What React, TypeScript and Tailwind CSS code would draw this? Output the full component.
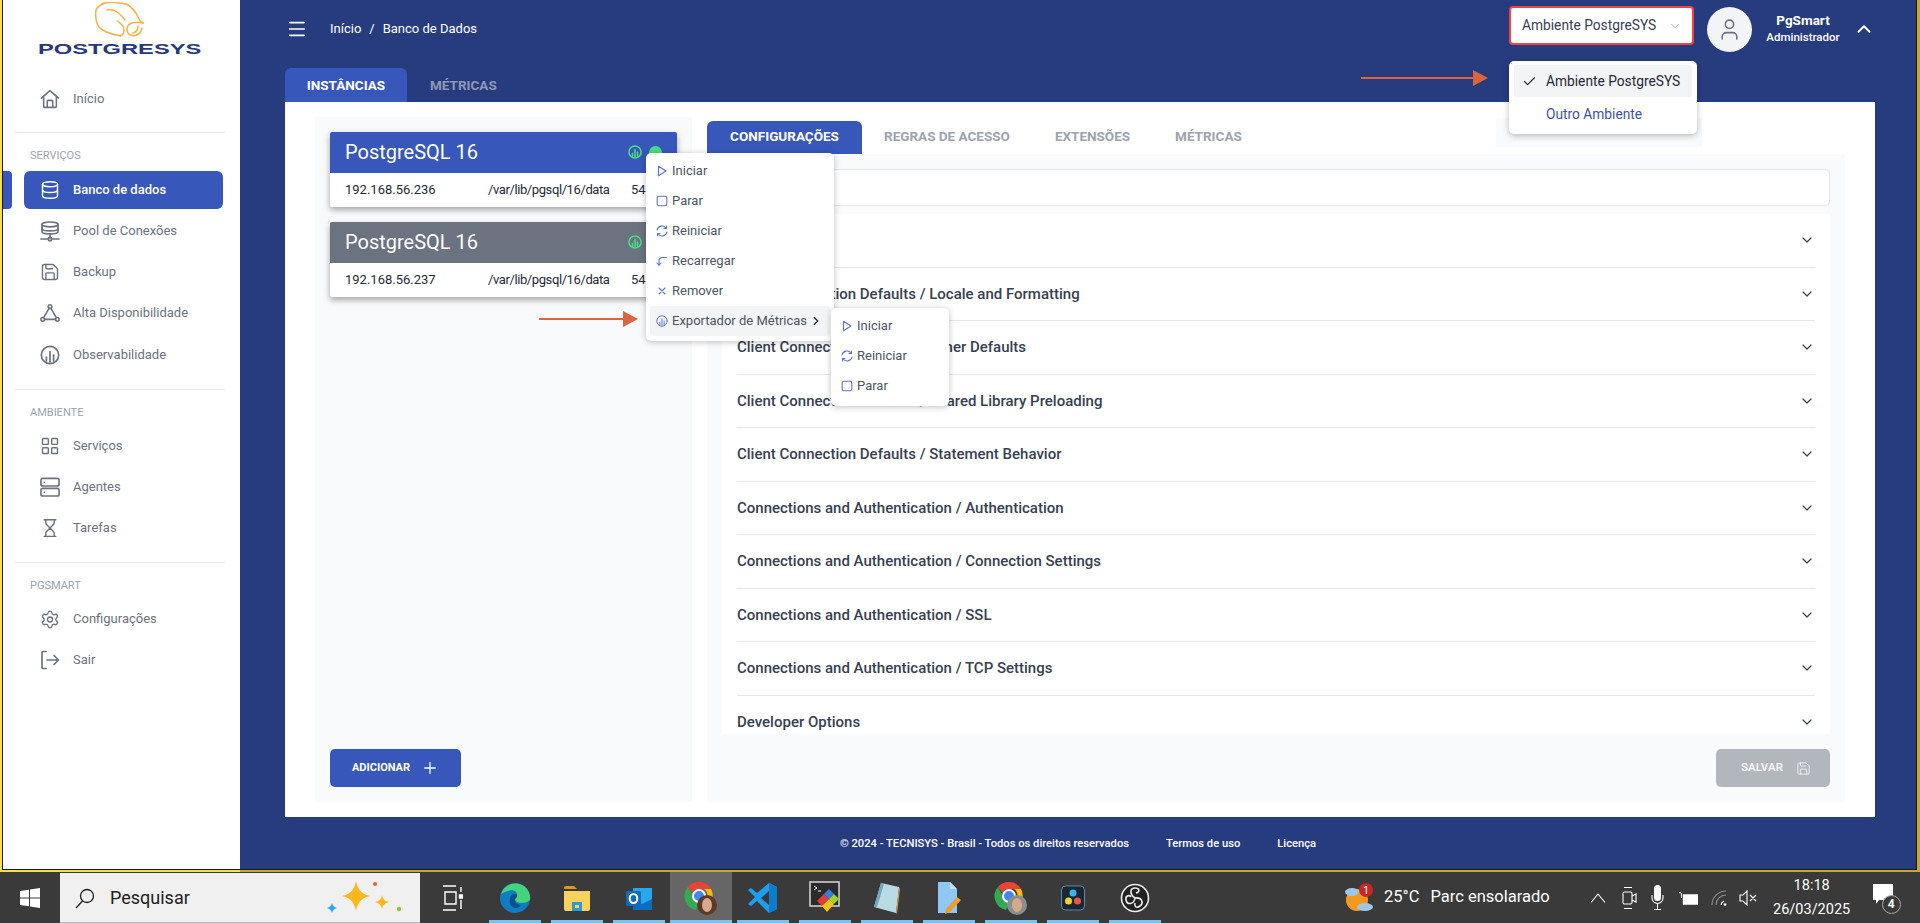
import { Check, ChevronDown, ChevronRight, ChevronUp, Database, Hourglass, LayoutGrid, Menu, Plus, Save, Settings, User } from "lucide-react";
import type { ReactNode } from "react";

const line = { fill: "none", stroke: "currentColor", strokeLinecap: "round", strokeLinejoin: "round" } as const;

function HomeIcon() {
  return (
    <svg width="22" height="22" viewBox="0 0 22 22" strokeWidth="1.7" {...line}>
      <path d="M1.5 10 11 1.8 20.5 10" />
      <path d="M4 8v11.2a1 1 0 0 0 1 1h12a1 1 0 0 0 1-1V8" />
      <path d="M8 20v-6.5a1 1 0 0 1 1-1h4a1 1 0 0 1 1 1V20" />
    </svg>
  );
}

function PoolIcon() {
  return (
    <svg width="20" height="21" viewBox="0 0 20 21" strokeWidth="1.7" {...line}>
      <ellipse cx="10" cy="3.4" rx="8" ry="2.4" />
      <path d="M2 3.4v7c0 1.4 3.6 2.4 8 2.4s8-1 8-2.4v-7" />
      <path d="M2 7.4c0 1.4 3.6 2.4 8 2.4s8-1 8-2.4" />
      <path d="M10 13v4M1 18h7M12 18h7" />
      <circle cx="10" cy="18" r="1.7" />
    </svg>
  );
}

function TriangleNodes() {
  return (
    <svg width="22" height="20" viewBox="0 0 22 20" strokeWidth="1.7" {...line}>
      <circle cx="11" cy="3" r="2" />
      <circle cx="3" cy="17" r="2" />
      <circle cx="19" cy="17" r="2" />
      <path d="M10 4.8 4 15.2M12 4.8l6 10.4M5 17h12" />
    </svg>
  );
}

function MetricIcon({ size = 20, width = 1.7 }: { size?: number; width?: number }) {
  return (
    <svg width={size} height={size} viewBox="0 0 20 20" strokeWidth={width} {...line}>
      <circle cx="10" cy="10" r="8.7" />
      <path d="M6.4 16v-4M10 17V6.5M13.6 16v-6" />
    </svg>
  );
}

function ExitIcon() {
  return (
    <svg width="20" height="20" viewBox="0 0 20 20" strokeWidth="1.7" {...line}>
      <path d="M6 1.5H3a1 1 0 0 0-1 1v15a1 1 0 0 0 1 1h3" />
      <path d="M7 10h11.5M14 5.5l4.5 4.5-4.5 4.5" />
    </svg>
  );
}

function AgentIcon() {
  return (
    <svg width="21" height="20" viewBox="0 0 21 20" strokeWidth="1.7" {...line}>
      <rect x="1" y="1" width="19" height="8" rx="2" />
      <rect x="1" y="11.5" width="19" height="8" rx="2" />
      <path d="M4.5 5h.1M4.5 15.5h.1" />
    </svg>
  );
}

function PlayIcon() {
  return (
    <svg width="12" height="12" viewBox="0 0 12 12" strokeWidth="1.1" {...line}>
      <path d="M2.5 1.2 10 6l-7.500 4.800z" />
    </svg>
  );
}

function StopIcon() {
  return (
    <svg width="12" height="12" viewBox="0 0 12 12" strokeWidth="1.1" {...line}>
      <rect x="1.200" y="1.200" width="9.600" height="9.600" rx="1.800" />
    </svg>
  );
}

function RestartIcon() {
  return (
    <svg width="12" height="12" viewBox="0 0 12 12" strokeWidth="1.100" {...line}>
      <path d="M1 5a5 5 0 0 1 9-1.800M11 7a5 5 0 0 1-9 1.800" />
      <path d="M10.400 1v2.500H8M1.600 11V8.500H4" />
    </svg>
  );
}

function ReloadIcon() {
  return (
    <svg width="12" height="12" viewBox="0 0 12 12" strokeWidth="1.100" {...line}>
      <path d="M10.500 2.500H6.500A3.500 3.500 0 0 0 3 6v4" />
      <path d="M1 8l2 2.200L5 8" />
    </svg>
  );
}

function CloseIcon() {
  return (
    <svg width="12" height="12" viewBox="0 0 12 12" strokeWidth="1.100" {...line}>
      <path d="M3 3l6 6M9 3 3 9" />
    </svg>
  );
}

function OrangeArrow({ width, className }: { width: number; className: string }) {
  return (
    <svg className={className} width={width} height="16" viewBox={`0 0 ${width} 16`}>
      <path d={`M0 7h${width - 14}v2H0z`} fill="#dc6440" />
      <path d={`M${width - 15} 0 ${width} 8l-15 8z`} fill="#dc6440" />
    </svg>
  );
}

function Logo() {
  return (
    <div className="flex flex-col items-center">
      <svg width="49" height="36" viewBox="0 0 49 36" fill="none" stroke="#fbb040" strokeWidth="1.500" strokeLinecap="round" strokeLinejoin="round">
        <path d="M6.600 2C11 0 16 0 20 0.500 26 1 30 1.500 33 3c5 3 8 8 10 12 1 3 3 5 5 6" />
        <path d="M8 2C3 4 0.500 7 0.600 11c0 6 1 11 3.400 14 3 4 11 7 21.600 9" />
        <path d="M12 8c4-1 7 0 10 2 3 2 6 5 8 8" />
        <path d="M48 21c-4-1-8-1-11 0-3 1-5 3-5 6 0 4 2 6 5 6.500 3 0.500 6-0.500 8-3 1-1.500 2-3 2-4.500" />
        <path d="M43 24c0 3-2 6-5 7" />
        <path d="M25.600 34c2-1 3.400-3 3.400-6 0-2-1-4-2-5-1-1-3-3-4.500-4" />
      </svg>
      <div className="mt-[4px] h-[14px] scale-x-[1.58] font-['Liberation_Sans'] text-[15px] leading-[14px] font-bold text-[#27397c]">POSTGRESYS</div>
    </div>
  );
}

function NavItem({ icon, label, active, top }: { icon: ReactNode; label: string; active?: boolean; top?: string }) {
  return (
    <div className={`mr-[17px] ml-[21px] flex items-center rounded-[6px] pl-[16px] text-[13px] ${top ?? "mt-[3px] h-[38px]"} ${active ? "bg-[#3757bb] font-medium text-white" : "text-[#6b7280]"}`}>
      <span className="flex w-[20px] justify-center">{icon}</span>
      <span className="ml-[13px]">{label}</span>
    </div>
  );
}

function Section({ title, children }: { title: string; children: ReactNode }) {
  return (
    <div className="mr-[15px] ml-[12px] border-t border-[#e5e7eb] pt-[14px]">
      <div className="pl-[15px] text-[11px] leading-[18px] text-[#9ca3af]">{title}</div>
      <div className="-mr-[15px] -ml-[12px]">{children}</div>
    </div>
  );
}

function Sidebar() {
  return (
    <aside className="relative flex w-[237px] shrink-0 flex-col bg-white">
      <div className="absolute top-[171px] left-0 h-[38px] w-[9px] rounded-r-[4px] bg-[#3757bb]" />
      <div className="h-[70px] pt-[2px] pr-[4px]">
        <Logo />
      </div>
      <div className="h-[62px] pt-[7px]">
        <NavItem icon={<HomeIcon />} label="Início" />
      </div>
      <Section title="SERVIÇOS">
        <NavItem active top="mt-[6px] h-[38px]" icon={<Database size={20} strokeWidth={1.7} />} label="Banco de dados" />
        <NavItem icon={<PoolIcon />} label="Pool de Conexões" />
        <NavItem icon={<Save size={20} strokeWidth={1.7} />} label="Backup" />
        <NavItem icon={<TriangleNodes />} label="Alta Disponibilidade" />
        <NavItem top="mt-[4px] h-[37px]" icon={<MetricIcon />} label="Observabilidade" />
      </Section>
      <div className="h-[16px]" />
      <Section title="AMBIENTE">
        <NavItem top="mt-[5px] h-[38px]" icon={<LayoutGrid size={20} strokeWidth={1.7} />} label="Serviços" />
        <NavItem icon={<AgentIcon />} label="Agentes" />
        <NavItem icon={<Hourglass size={20} strokeWidth={1.7} />} label="Tarefas" />
      </Section>
      <div className="h-[15px]" />
      <Section title="PGSMART">
        <NavItem top="mt-[5px] h-[38px]" icon={<Settings size={21} strokeWidth={1.600} />} label="Configurações" />
        <NavItem icon={<ExitIcon />} label="Sair" />
      </Section>
    </aside>
  );
}

function Header() {
  return (
    <header className="flex h-[58px] items-center pr-[41px] pl-[46px] text-white">
      <Menu size={22} strokeWidth={1.800} />
      <nav className="ml-[22px] flex gap-[8px] text-[13px]">
        <span>Início</span>
        <span>/</span>
        <span>Banco de Dados</span>
      </nav>
      <div className="mb-[7px] ml-auto flex h-[39px] w-[185px] items-center justify-between rounded-[4px] border-2 border-[#ef4444] bg-white pr-[10px] pl-[11px] text-[13.750px] text-[#374151]">
        <span>Ambiente PostgreSYS</span>
        <ChevronDown size={14} strokeWidth={1.300} className="text-[#9ca3af]" />
      </div>
      <div className="mt-[1px] ml-[13px] flex h-[45px] w-[45px] items-center justify-center rounded-full bg-[#f3f4f6] text-[#6b7280]">
        <User size={25} strokeWidth={1.500} />
      </div>
      <div className="ml-[16px] flex w-[70px] flex-col items-center">
        <span className="text-[13.5px] leading-[17px] font-bold">PgSmart</span>
        <span className="text-[11.500px] leading-[17px] font-medium">Administrador</span>
      </div>
      <ChevronUp size={22} strokeWidth={2} className="ml-[15px]" />
    </header>
  );
}

function InstanceCard({ ip, dark }: { ip: string; dark?: boolean }) {
  return (
    <div className="rounded-[2px] bg-white shadow-[0_3px_6px_rgba(0,0,0,0.35)]">
      <div className={`flex h-[41px] items-center rounded-t-[2px] pr-[15px] pb-[1px] pl-[15px] text-[20px] text-white ${dark ? "bg-[#6b7280]" : "bg-[#3757bb]"}`}>
        <span>PostgreSQL 16</span>
        <span className="ml-auto flex items-center gap-[7px] text-[#4ade80]">
          <MetricIcon size={14} width={2.200} />
          <span className="h-[13px] w-[13px] rounded-full bg-[#4ade80]" />
        </span>
      </div>
      <div className="flex h-[34px] items-center pl-[15px] text-[13px] text-[#1f2937]">
        <span className="w-[143px]">{ip}</span>
        <span className="w-[143px] tracking-[-0.4px]">/var/lib/pgsql/16/data</span>
        <span>5432</span>
      </div>
    </div>
  );
}

function Row({ label }: { label: string }) {
  return (
    <div className="mx-[15px] flex h-[53.5px] shrink-0 items-center justify-between border-b border-[#e5e7eb] text-[15px] font-medium text-[#374151]">
      <span>{label}</span>
      <ChevronDown size={16} strokeWidth={1.800} />
    </div>
  );
}

function Content() {
  return (
    <div className="mr-[41px] ml-[45px] flex h-[715px] gap-[15px] bg-white px-[30px] py-[15px]">
      <section className="flex w-[377px] flex-col bg-[#f9fafb] p-[15px]">
        <InstanceCard ip="192.168.56.236" />
        <div className="h-[15px]" />
        <InstanceCard ip="192.168.56.237" dark />
        <button className="mt-auto flex h-[38px] w-[131px] items-center justify-center gap-[11px] rounded-[5px] bg-[#3757bb] text-[11px] font-bold text-white">
          ADICIONAR
          <Plus size={18} strokeWidth={1.700} />
        </button>
      </section>
      <section className="flex flex-1 flex-col">
        <div className="flex h-[37px] items-end pt-[4px] text-[13.500px] font-bold">
          <span className="flex h-[33px] w-[155px] items-center justify-center rounded-t-[6px] bg-[#3757bb] pb-[2px] text-white">CONFIGURAÇÕES</span>
          <span className="ml-[22px] flex h-[33px] items-center pb-[2px] text-[#9ca3af]">REGRAS DE ACESSO</span>
          <span className="ml-[45px] flex h-[33px] items-center pb-[2px] text-[#9ca3af]">EXTENSÕES</span>
          <span className="ml-[45px] flex h-[33px] items-center pb-[2px] text-[#9ca3af]">MÉTRICAS</span>
        </div>
        <div className="flex flex-1 flex-col bg-[#f9fafb] p-[15px]">
          <div className="h-[37px] rounded-[5px] border border-[#e5e7eb] bg-white" />
          <div className="mt-[8px] flex h-[520px] flex-col overflow-hidden bg-white">
            <Row label="Autovacuum" />
            <Row label="Client Connection Defaults / Locale and Formatting" />
            <Row label="Client Connection Defaults / Other Defaults" />
            <Row label="Client Connection Defaults / Shared Library Preloading" />
            <Row label="Client Connection Defaults / Statement Behavior" />
            <Row label="Connections and Authentication / Authentication" />
            <Row label="Connections and Authentication / Connection Settings" />
            <Row label="Connections and Authentication / SSL" />
            <Row label="Connections and Authentication / TCP Settings" />
            <Row label="Developer Options" />
          </div>
          <button className="mt-[15px] ml-auto flex h-[38px] w-[114px] items-center justify-center gap-[13px] rounded-[5px] bg-[#b2b6bd] pl-[6px] text-[11.500px] font-bold text-[#f3f4f6]">
            SALVAR
            <Save size={15} strokeWidth={1.400} />
          </button>
        </div>
      </section>
    </div>
  );
}

function MenuRow({ icon, label, active, children }: { icon: ReactNode; label: string; active?: boolean; children?: ReactNode }) {
  return (
    <div className={`flex h-[30px] items-center rounded-[3px] pl-[4px] text-[13px] whitespace-nowrap text-[#4b5563] ${active ? "bg-[#f3f4f6]" : ""}`}>
      <span className="flex w-[15px] justify-center text-[#5b73d0]">{icon}</span>
      <span className="ml-[3px]">{label}</span>
      {children}
    </div>
  );
}

function Menus() {
  return (
    <>
      <div className="absolute top-[118px] left-[1496px] h-[29px] w-[206px] bg-[#f9fafb]" />
      <OrangeArrow width={127} className="absolute top-[70px] left-[1361px]" />
      <OrangeArrow width={99} className="absolute top-[311px] left-[539px]" />
      <div className="absolute top-[61px] left-[1509px] h-[73px] w-[188px] rounded-[5px] bg-white px-[5px] pt-[4px] text-[13.750px] shadow-[0_2px_6px_rgba(0,0,0,0.25)]">
        <div className="flex h-[32px] items-center rounded-[3px] bg-[#f3f4f6] pl-[8px] text-[#1f2937]">
          <Check size={15} strokeWidth={1.800} />
          <span className="ml-[9px]">Ambiente PostgreSYS</span>
        </div>
        <div className="mt-[1px] h-[32px] pl-[32px] leading-[32px] text-[#3f51a8]">Outro Ambiente</div>
      </div>
      <div className="absolute top-[153px] left-[646px] w-[188px] rounded-[5px] bg-white px-[4px] pt-[3px] pb-[5px] shadow-[0_1px_6px_rgba(0,0,0,0.25)]">
        <MenuRow icon={<PlayIcon />} label="Iniciar" />
        <MenuRow icon={<StopIcon />} label="Parar" />
        <MenuRow icon={<RestartIcon />} label="Reiniciar" />
        <MenuRow icon={<ReloadIcon />} label="Recarregar" />
        <MenuRow icon={<CloseIcon />} label="Remover" />
        <MenuRow active icon={<MetricIcon size={12} width={1.600} />} label="Exportador de Métricas">
          <ChevronRight size={14} strokeWidth={2.300} className="ml-[2px] text-[#1f2937]" />
        </MenuRow>
      </div>
      <div className="absolute top-[308px] left-[831px] w-[118px] rounded-[5px] bg-white px-[4px] pt-[3px] pb-[5px] shadow-[0_1px_6px_rgba(0,0,0,0.25)]">
        <MenuRow icon={<PlayIcon />} label="Iniciar" />
        <MenuRow icon={<RestartIcon />} label="Reiniciar" />
        <MenuRow icon={<StopIcon />} label="Parar" />
      </div>
    </>
  );
}

function ChromeIcon({ face }: { face: string }) {
  return (
    <svg width="36" height="36" viewBox="0 0 36 36">
      <path d="M16 2a14 14 0 0 1 12 7H16a7 7 0 0 0-6.500 4L5 7a14 14 0 0 1 11-5z" fill="#ea4335" />
      <path d="M28 9a14 14 0 0 1-6 19l-6-3 5-4a7 7 0 0 0 0-12z" fill="#fbbc04" />
      <path d="M5 7l6 11a7 7 0 0 0 6 4l-4 8A14 14 0 0 1 5 7z" fill="#34a853" />
      <circle cx="16" cy="16" r="6" fill="#4285f4" stroke="#fff" strokeWidth="2" />
      <circle cx="24" cy="25" r="10" fill={face} />
      <ellipse cx="24" cy="25" rx="5" ry="7" fill="#d6a98c" />
    </svg>
  );
}

function TaskIcon({ children, active, plain }: { children: ReactNode; active?: boolean; plain?: boolean }) {
  return (
    <div className={`relative flex h-[51px] w-[62px] shrink-0 items-center justify-center ${active ? "bg-[#666666]" : ""}`}>
      {children}
      {!plain && <span className={`absolute bottom-0 h-[3px] bg-[#7cc0ee] ${active ? "inset-x-0" : "inset-x-[5px]"}`} />}
    </div>
  );
}

function Taskbar() {
  return (
    <footer className="flex h-[51px] items-center bg-[#3a3a3b] font-['Roboto'] text-white">
      <div className="flex w-[60px] shrink-0 justify-center">
        <svg width="20" height="20" viewBox="0 0 20 20" fill="#fff">
          <path d="M0 3l9-1.300V9.500H0zM10 1.500 20 0v9.500H10zM0 10.500h9v7.800l-9-1.300zM10 10.500h10V20l-10-1.500z" />
        </svg>
      </div>
      <div className="mt-[1px] flex h-[50px] w-[360px] shrink-0 items-center border-b border-[#b8b8b8] bg-[#f0f0f0] pl-[14px] text-[#202020]">
        <svg width="22" height="22" viewBox="0 0 22 22" fill="none" stroke="#202020" strokeWidth="1.300">
          <circle cx="13" cy="9" r="6.500" />
          <path d="M8.500 14 2 21" />
        </svg>
        <span className="ml-[14px] text-[18px]">Pesquisar</span>
        <svg className="ml-[137px]" width="76" height="38" viewBox="0 0 76 38">
          <path d="M29 2c2 10 6 13 14 15-8 2-12 5-14 15-2-10-6-13-14-15 8-2 12-5 14-15z" fill="#fbb81c" />
          <path d="M55 16c1 5 3 6 7 7-4 1-6 3-7 7-1-4-3-6-7-7 4-1 6-2 7-7z" fill="#fbb81c" />
          <path d="M5 24c1 3 2 4 5 5-3 1-4 2-5 5-1-3-2-4-5-5 3-1 4-2 5-5z" fill="#27a5ef" />
          <circle cx="48" cy="5" r="2" fill="#e8622c" />
          <circle cx="72" cy="30" r="2.200" fill="#8cc63f" />
        </svg>
      </div>
      <div className="ml-[2px] flex">
        <TaskIcon plain>
          <svg width="20" height="26" viewBox="0 0 20 26" fill="none" stroke="#fff" strokeWidth="1.400">
            <path d="M0 1h13M0 25h13M2 7h11v12H2zM18 2v5M18 15v9" />
            <path d="M16.500 10h3v3h-3z" fill="#fff" />
          </svg>
        </TaskIcon>
        <TaskIcon>
          <svg width="32" height="32" viewBox="0 0 32 32">
            <circle cx="16" cy="16" r="15" fill="#0f7dc4" />
            <path d="M2 12C5 3 15-1 23 3c6 3 9 9 8 15-3 3-9 4-13 2-3-2-2-5 0-6 1-4-4-7-9-5-3 1-5 2-7 3z" fill="#43d47d" />
            <path d="M11 17c0-4 3-6 6-5 2 1 1 4-1 5-1 3 2 6 6 6-4 6-13 2-11-6z" fill="#0b4f8f" />
          </svg>
        </TaskIcon>
        <TaskIcon>
          <svg width="30" height="30" viewBox="0 0 30 30">
            <path d="M2 5a2 2 0 0 1 2-2h8l3 3H2z" fill="#d99a1e" />
            <path d="M2 8h26v18a2 2 0 0 1-2 2H4a2 2 0 0 1-2-2z" fill="#fbd35c" />
            <path d="M10 19h10v9H10z" fill="#2d9ad8" />
            <path d="M13 22h4v3h-4z" fill="#fbd35c" />
          </svg>
        </TaskIcon>
        <TaskIcon>
          <svg width="30" height="30" viewBox="0 0 30 30">
            <path d="M9 5h19v20H9z" fill="#28a8ea" />
            <path d="M9 16l9 5 10-5v11H9z" fill="#0a6dbd" />
            <rect x="2" y="8" width="15" height="15" rx="1.500" fill="#0f6cbd" />
            <ellipse cx="9.500" cy="15.500" rx="3.800" ry="4.600" fill="none" stroke="#fff" strokeWidth="2" />
          </svg>
        </TaskIcon>
        <TaskIcon active>
          <ChromeIcon face="#5a3a28" />
        </TaskIcon>
        <TaskIcon>
          <svg width="32" height="32" viewBox="0 0 32 32">
            <path d="M22 1l8 4v22l-8 4-12-12-6 5-3-2 7-7-7-7 3-2 6 5z" fill="#1f9cf0" />
            <path d="M22 9v14l-8-7z" fill="#3a3a3b" />
            <path d="M22 1l8 4v22l-8 4z" fill="#0d7ccc" />
          </svg>
        </TaskIcon>
        <TaskIcon>
          <svg width="32" height="34" viewBox="0 0 32 34">
            <rect x="1" y="1" width="29" height="24" fill="#2b2b2b" stroke="#d8d8d8" strokeWidth="1.500" />
            <path d="M5 5l3 2-3 2M9 10h3" fill="none" stroke="#fff" strokeWidth="1" />
            <path d="M8 20l7-7 5 5-7 7z" fill="#e63b3b" />
            <path d="M15 13l5-5 5 5-5 5z" fill="#3a7be0" />
            <path d="M20 18l5-5 5 5-5 5z" fill="#a4d021" />
            <path d="M13 25l7-7 5 5-7 8z" fill="#f0c419" />
          </svg>
        </TaskIcon>
        <TaskIcon>
          <svg width="28" height="34" viewBox="0 0 28 34">
            <path d="M8 2l18 4-3 26L1 26z" fill="#b9dbe4" />
            <path d="M26 6l1 2-3 25-1-1z" fill="#c89a4b" />
            <path d="M8 2l3 1-7 23H1z" fill="#6fa9bb" />
          </svg>
        </TaskIcon>
        <TaskIcon>
          <svg width="26" height="34" viewBox="0 0 26 34">
            <path d="M2 1h12l7 7v24H2z" fill="#90c8f5" />
            <path d="M14 1l7 7h-7z" fill="#c4e1fa" />
            <path d="M9 33l1-5 11-12 4 3-11 12z" fill="#f09d2a" />
          </svg>
        </TaskIcon>
        <TaskIcon>
          <ChromeIcon face="#8a8f8d" />
        </TaskIcon>
        <TaskIcon>
          <svg width="26" height="30" viewBox="0 0 26 30">
            <rect x="1.500" y="3" width="23" height="24" rx="4" fill="#1c2530" stroke="#4a90b0" strokeWidth="1" />
            <circle cx="13" cy="10" r="3.500" fill="#39b6e8" />
            <circle cx="8.500" cy="18" r="3.500" fill="#e9d735" />
            <circle cx="17.500" cy="18" r="3.500" fill="#e4574c" />
          </svg>
        </TaskIcon>
        <TaskIcon>
          <svg width="30" height="30" viewBox="0 0 30 30" fill="none" stroke="#eee" strokeWidth="1.600">
            <circle cx="15" cy="15" r="13.500" fill="#222" />
            <path d="M15 15c-6-4-5-10 0-10s5 4 1 5M15 15c7-1 9 5 5 8s-6 0-5-3M15 15c-1 7-8 7-9 2s4-5 5-3" />
          </svg>
        </TaskIcon>
      </div>
      <div className="ml-[178px] flex items-center">
        <svg width="30" height="30" viewBox="0 0 30 30">
          <circle cx="13" cy="17" r="11" fill="#f39a1d" />
          <ellipse cx="8" cy="9" rx="7" ry="4" fill="#9dc7e8" />
          <ellipse cx="21" cy="24" rx="8" ry="4" fill="#9dc7e8" />
          <ellipse cx="22" cy="7" rx="7" ry="7" fill="#c62828" />
          <text x="22" y="11" fontSize="10" fill="#fff" textAnchor="middle" fontFamily="Roboto">1</text>
        </svg>
        <span className="ml-[10px] text-[16.500px]">25°C</span>
        <span className="ml-[11px] text-[16.500px]">Parc ensolarado</span>
      </div>
      <div className="ml-[40px] flex items-center">
        <svg width="16" height="10" viewBox="0 0 16 10" fill="none" stroke="#fff" strokeWidth="1.100">
          <path d="M1 9.500 8 1l7 8.500" />
        </svg>
        <svg className="ml-[16px]" width="15" height="24" viewBox="0 0 15 24" fill="none" stroke="#fff" strokeWidth="1.100">
          <path d="M2 1.500h8M2 22.500h8" />
          <rect x="1" y="6" width="9" height="12" rx="1.500" />
          <path d="M10 10l4-2v8l-4-2" />
        </svg>
        <svg className="ml-[14px]" width="13" height="26" viewBox="0 0 13 26" fill="#fff">
          <rect x="3" y="0" width="7" height="16" rx="3.500" />
          <path d="M1 10v3a5.500 5.500 0 0 0 11 0v-3" fill="none" stroke="#fff" strokeWidth="1.100" />
          <path d="M6 19h1v5H6zM3 24h7v1H3z" />
        </svg>
        <svg className="ml-[15px]" width="19" height="14" viewBox="0 0 20 14" fill="#fff">
          <path d="M4 3h16v11H4zM0 1h2v1H0zM2 2h1v5H2z" />
        </svg>
        <svg className="ml-[13px]" width="16" height="16" viewBox="0 0 16 16" fill="none" stroke="#8f8f8f" strokeWidth="1.100">
          <path d="M1 15A14 14 0 0 1 15 1M5 15A10 10 0 0 1 15 5" />
          <path d="M10 15a5 5 0 0 1 3-4" stroke="#fff" />
          <circle cx="14" cy="14.500" r="1.300" fill="#fff" stroke="none" />
        </svg>
        <svg className="ml-[12px]" width="18" height="16" viewBox="0 0 18 16" fill="none" stroke="#fff" strokeWidth="1.100">
          <path d="M1 5h3l4-4v14l-4-4H1zM11 5l6 6M17 5l-6 6" />
        </svg>
      </div>
      <div className="ml-[14px] flex w-[82px] flex-col items-center text-[14.500px] leading-[24px]">
        <span>18:18</span>
        <span>26/03/2025</span>
      </div>
      <div className="relative ml-[20px] h-[32px] w-[28px]">
        <svg className="mt-[2px]" width="20" height="20" viewBox="0 0 20 20" fill="#fff">
          <path d="M0 0h20v16H6l-3 4v-4H0z" />
        </svg>
        <span className="absolute top-[13px] left-[9px] flex h-[19px] w-[19px] items-center justify-center rounded-full border border-[#aaa] bg-[#3a3a3b] text-[12px] font-bold">4</span>
      </div>
    </footer>
  );
}

export default function App() {
  return (
    <div className="relative flex h-[923px] w-full flex-col overflow-hidden bg-[#3a3a3b] font-['Roboto',sans-serif]">
      <div className="flex h-[870px] border-r-4 border-b border-l-[3px] border-[#141a33]">
        <Sidebar />
        <main className="flex flex-1 flex-col bg-[#273b7f]">
          <Header />
          <div className="mt-[10px] flex h-[34px] pl-[45px] text-[13.500px] font-bold">
            <span className="flex w-[122px] items-center justify-center rounded-t-[6px] bg-[#3757bb] text-white">INSTÂNCIAS</span>
            <span className="ml-[23px] flex items-center text-[#8f99b5]">MÉTRICAS</span>
          </div>
          <Content />
          <div className="flex flex-1 items-center justify-center gap-[37px] pt-[3px] text-[11.200px] font-medium text-white">
            <span>© 2024 - TECNISYS - Brasil - Todos os direitos reservados</span>
            <span>Termos de uso</span>
            <span>Licença</span>
          </div>
        </main>
      </div>
      <div className="h-[2px] shrink-0 bg-[linear-gradient(90deg,#fde047_240px,#c8a92a_240px)]" />
      <Taskbar />
      <div className="absolute top-0 left-0 h-[872px] w-[2px] bg-[#fde047]" />
      <div className="absolute top-0 right-0 h-[872px] w-[3px] bg-[#c8a92a]" />
      <Menus />
    </div>
  );
}
